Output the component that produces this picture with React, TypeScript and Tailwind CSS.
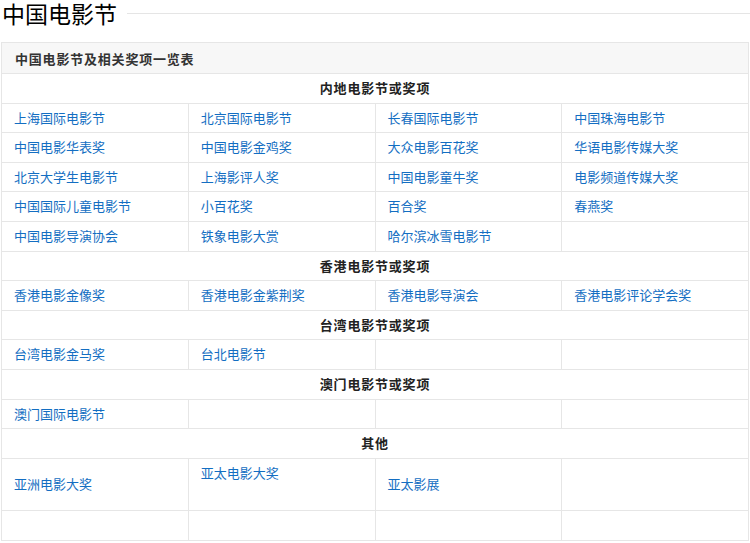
/* --------------------------------------------------------------------------
   Data
   -------------------------------------------------------------------------- */

type Cell = string | string[];

interface Section {
  title: string;
  rows: Cell[][];
}

const SECTIONS: Section[] = [
  {
    title: "内地电影节或奖项",
    rows: [
      ["上海国际电影节", "北京国际电影节", "长春国际电影节", "中国珠海电影节"],
      ["中国电影华表奖", "中国电影金鸡奖", "大众电影百花奖", "华语电影传媒大奖"],
      ["北京大学生电影节", "上海影评人奖", "中国电影童牛奖", "电影频道传媒大奖"],
      ["中国国际儿童电影节", "小百花奖", "百合奖", "春燕奖"],
      ["中国电影导演协会", "铁象电影大赏", "哈尔滨冰雪电影节", ""],
    ],
  },
  {
    title: "香港电影节或奖项",
    rows: [["香港电影金像奖", "香港电影金紫荆奖", "香港电影导演会", "香港电影评论学会奖"]],
  },
  {
    title: "台湾电影节或奖项",
    rows: [["台湾电影金马奖", "台北电影节", "", ""]],
  },
  {
    title: "澳门电影节或奖项",
    rows: [["澳门国际电影节", "", "", ""]],
  },
  {
    title: "其他",
    rows: [
      ["亚洲电影大奖", ["亚太电影大奖", ""], "亚太影展", ""],
      ["", "", "", ""],
    ],
  },
];

const FONT = { fontFamily: '"Noto Sans CJK SC", "Liberation Sans", sans-serif' };

/* --------------------------------------------------------------------------
   Component
   -------------------------------------------------------------------------- */

function LinkCell({ cell }: { cell: Cell }) {
  const lines = Array.isArray(cell) ? cell : [cell];
  return (
    <td className="border border-[#e6e6e6] py-[3px] pl-[12px] pr-[6px] align-middle text-[13px] leading-[22.6px] text-[#136ec2]">
      {lines.map((line, i) => (
        <div key={i} className="h-[22.6px] whitespace-nowrap">
          {line}
        </div>
      ))}
    </td>
  );
}

export default function App() {
  return (
    <div className="w-[750px] bg-white" style={FONT}>
      {/* Heading with rule */}
      <div className="flex items-center pl-[2px]">
        <h2 className="text-[23px] leading-[27px] text-black">中国电影节</h2>
        <div className="ml-[10px] h-px flex-1 bg-[#e5e5e5]" />
      </div>

      <table className="ml-[1px] mt-[15px] w-[748px] table-fixed border-collapse">
        <tbody>
          <tr>
            <td
              colSpan={4}
              className="border border-[#e6e6e6] bg-[#f7f7f7] py-[3.5px] pl-[13px] text-[13px] font-bold leading-[23px] tracking-[0.8px] text-[#333]"
            >
              中国电影节及相关奖项一览表
            </td>
          </tr>
          {SECTIONS.map((section) => (
            <SectionRows key={section.title} section={section} />
          ))}
        </tbody>
      </table>
    </div>
  );
}

function SectionRows({ section }: { section: Section }) {
  return (
    <>
      <tr>
        <td
          colSpan={4}
          className="border border-[#e6e6e6] py-[3px] text-center text-[13px] font-bold leading-[22.6px] tracking-[0.8px] text-[#222]"
        >
          {section.title}
        </td>
      </tr>
      {section.rows.map((row, r) => (
        <tr key={r}>
          {row.map((cell, c) => (
            <LinkCell key={c} cell={cell} />
          ))}
        </tr>
      ))}
    </>
  );
}
